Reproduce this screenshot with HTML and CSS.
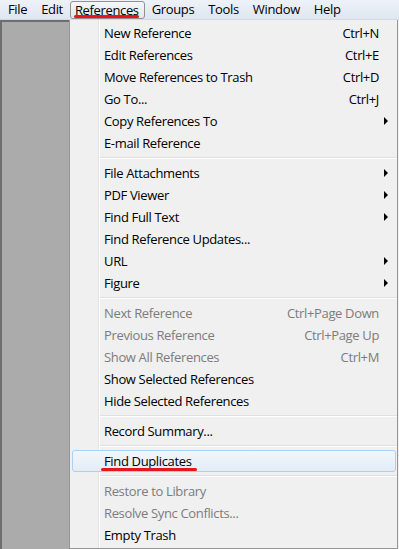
FILE: index.html
```html
<!DOCTYPE html>
<html lang="en">
<head>
    <meta charset="UTF-8">
    <title>References menu</title>
    <link rel="stylesheet" href="styles.css">
</head>
<body>
    <div class="menubar">
        <span class="top">File</span>
        <span class="top">Edit</span>
        <span class="top open">References<i class="mark mark-top"></i></span>
        <span class="top">Groups</span>
        <span class="top">Tools</span>
        <span class="top">Window</span>
        <span class="top">Help</span>
    </div>

    <div class="main">
        <div class="side"></div>
        <div class="menu">
            <div class="item"><span class="label">New Reference</span><span class="key">Ctrl+N</span><span class="sub"></span></div>
            <div class="item"><span class="label">Edit References</span><span class="key">Ctrl+E</span><span class="sub"></span></div>
            <div class="item"><span class="label">Move References to Trash</span><span class="key">Ctrl+D</span><span class="sub"></span></div>
            <div class="item"><span class="label">Go To...</span><span class="key">Ctrl+J</span><span class="sub"></span></div>
            <div class="item"><span class="label">Copy References To</span><span class="key"></span><span class="sub"><i class="arrow"></i></span></div>
            <div class="item"><span class="label">E-mail Reference</span><span class="key"></span><span class="sub"></span></div>
            <div class="sep"></div>
            <div class="item"><span class="label">File Attachments</span><span class="key"></span><span class="sub"><i class="arrow"></i></span></div>
            <div class="item"><span class="label">PDF Viewer</span><span class="key"></span><span class="sub"><i class="arrow"></i></span></div>
            <div class="item"><span class="label">Find Full Text</span><span class="key"></span><span class="sub"><i class="arrow"></i></span></div>
            <div class="item"><span class="label">Find Reference Updates...</span><span class="key"></span><span class="sub"></span></div>
            <div class="item"><span class="label">URL</span><span class="key"></span><span class="sub"><i class="arrow"></i></span></div>
            <div class="item"><span class="label">Figure</span><span class="key"></span><span class="sub"><i class="arrow"></i></span></div>
            <div class="sep"></div>
            <div class="item off"><span class="label">Next Reference</span><span class="key">Ctrl+Page Down</span><span class="sub"></span></div>
            <div class="item off"><span class="label">Previous Reference</span><span class="key">Ctrl+Page Up</span><span class="sub"></span></div>
            <div class="item off"><span class="label">Show All References</span><span class="key">Ctrl+M</span><span class="sub"></span></div>
            <div class="item"><span class="label">Show Selected References</span><span class="key"></span><span class="sub"></span></div>
            <div class="item"><span class="label">Hide Selected References</span><span class="key"></span><span class="sub"></span></div>
            <div class="sep"></div>
            <div class="item"><span class="label">Record Summary...</span><span class="key"></span><span class="sub"></span></div>
            <div class="sep"></div>
            <div class="item hot"><span class="label">Find Duplicates<i class="mark mark-item"></i></span><span class="key"></span><span class="sub"></span></div>
            <div class="sep"></div>
            <div class="item off"><span class="label">Restore to Library</span><span class="key"></span><span class="sub"></span></div>
            <div class="item off"><span class="label">Resolve Sync Conflicts...</span><span class="key"></span><span class="sub"></span></div>
            <div class="item"><span class="label">Empty Trash</span><span class="key"></span><span class="sub"></span></div>
        </div>
    </div>
</body>
</html>
```

FILE: styles.css
```css
body {
    margin: 0;
    width: 399px;
    height: 549px;
    overflow: hidden;
    font-family: 'Open Sans', 'Noto Sans', sans-serif;
    font-size: 13px;
    color: #000;
    background-color: #f0f0f0;
}
.menubar {
    display: flex;
    height: 19px;
    padding-left: 1px;
    background: linear-gradient(#eef2f8, #dfe6f0);
    border-bottom: 1px solid #d3dae5;
}
.top {
    position: relative;
    padding: 0 7px;
    line-height: 18px;
    letter-spacing: -0.35px;
}
.top.open {
    margin-top: 1px;
    padding: 0 5px 0 4px;
    line-height: 16px;
    border: 1px solid #8f9193;
    border-radius: 3px;
    background: linear-gradient(#f4f6f9, #e4e8ee);
}
.mark {
    position: absolute;
    height: 3px;
    background-color: #e8151c;
    border-radius: 2px;
}
.mark-top {
    left: 3px;
    right: 5px;
    top: 13px;
}
.main {
    display: flex;
    height: 529px;
}
.side {
    width: 67px;
    background-color: #ababab;
    border-left: 2px solid #6e6e6e;
    border-top: 2px solid #6e6e6e;
}
.menu {
    width: 327px;
    padding: 2px 0;
    border-left: 1px solid #979797;
    border-right: 1px solid #979797;
    border-bottom: 1px solid #979797;
    background: linear-gradient(to right, transparent 28px, #e2e3e3 28px, #e2e3e3 29px, #fff 29px, #fff 30px, transparent 30px), #f0f0f0;
}
.item {
    display: flex;
    align-items: center;
    height: 21px;
    padding-left: 34px;
    padding-bottom: 1px;
    letter-spacing: -0.35px;
}
.item .label {
    position: relative;
    flex: 1;
}
.item .key {
    text-align: right;
}
.item .sub {
    width: 18px;
    display: flex;
    align-items: center;
    justify-content: flex-end;
    padding-right: 9px;
    box-sizing: border-box;
}
.arrow {
    width: 0;
    height: 0;
    border-left: 4px solid #000;
    border-top: 4px solid transparent;
    border-bottom: 4px solid transparent;
}
.item.off {
    color: #7c7c7c;
}
.item.hot {
    margin-left: 2px;
    margin-right: 1px;
    padding-left: 31px;
    border: 1px solid #a9d1f5;
    border-radius: 3px;
    height: 19px;
    background: linear-gradient(#f3f6fb, #e4ecf7);
}
.item.hot .sub {
    width: 17px;
}
.mark-item {
    left: -3px;
    width: 96px;
    top: 16px;
}
.sep {
    height: 0;
    margin: 3px 0 3px 30px;
    border-top: 1px solid #e0e0e0;
    border-bottom: 1px solid #fff;
}
```
